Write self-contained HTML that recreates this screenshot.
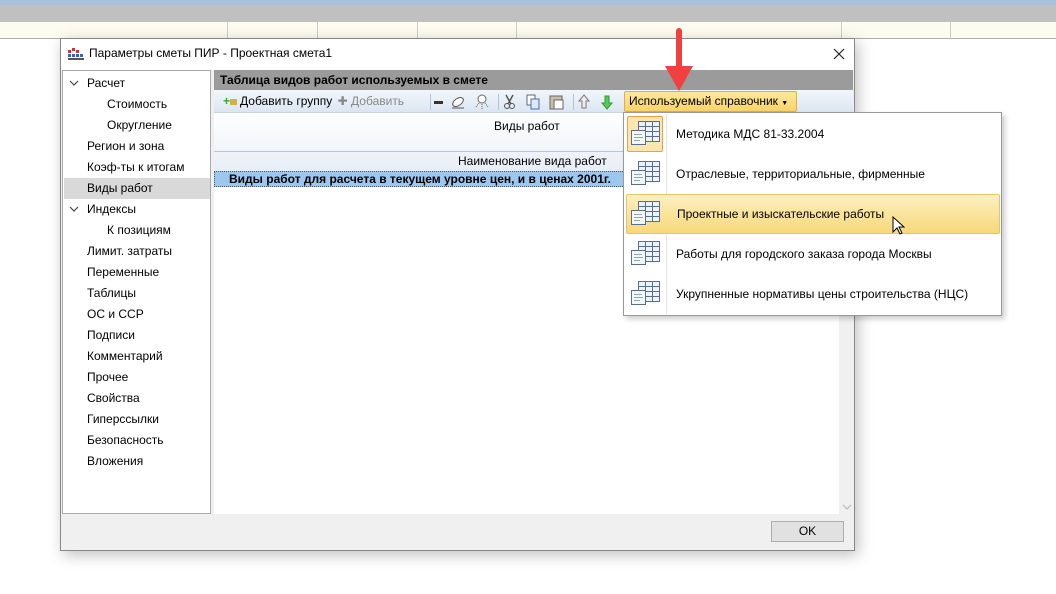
<!DOCTYPE html>
<html><head><meta charset="utf-8"><style>
*{margin:0;padding:0;box-sizing:border-box}
body{width:1056px;height:594px;overflow:hidden;background:#fff;font-family:"Liberation Sans",sans-serif;font-size:12px;color:#000;position:relative}
.a{position:absolute}
.tree div{position:absolute;left:0;width:148px;height:21px;line-height:21px;white-space:nowrap}
.mi{position:absolute;left:2px;width:374px;height:40px}
.mi .t{position:absolute;left:50px;top:0;line-height:40px;font-size:12px;white-space:nowrap}
</style></head><body>
<div class="a" style="left:0;top:0;width:1056px;height:5px;background:#a8c2dc"></div>
<div class="a" style="left:0;top:5px;width:1056px;height:17px;background:#c0c0c0"></div>
<div class="a" style="left:0;top:22px;width:1056px;height:17px;background:#fdfcf0;border-bottom:1px solid #b0b0b0"></div>
<div class="a" style="left:227px;top:22px;width:1px;height:17px;background:#ccc"></div>
<div class="a" style="left:317px;top:22px;width:1px;height:17px;background:#ccc"></div>
<div class="a" style="left:417px;top:22px;width:1px;height:17px;background:#ccc"></div>
<div class="a" style="left:516px;top:22px;width:1px;height:17px;background:#ccc"></div>
<div class="a" style="left:841px;top:22px;width:1px;height:17px;background:#ccc"></div>
<div class="a" style="left:950px;top:22px;width:1px;height:17px;background:#ccc"></div>

<div class="a" style="left:60px;top:38px;width:795px;height:513px;background:#f0f0f0;border:1px solid #888;box-shadow:3px 4px 14px rgba(0,0,0,.25)">
 <div class="a" style="left:0;top:0;width:793px;height:31px;background:#fff"></div>
 <svg class="a" style="left:7px;top:8px" width="16" height="14"><rect x="0" y="3" width="3" height="3" fill="#c33"/><rect x="4" y="1" width="3" height="3" fill="#c33"/><rect x="8" y="3" width="3" height="3" fill="#c33"/><rect x="0" y="7" width="3" height="3" fill="#36c"/><rect x="4" y="7" width="3" height="3" fill="#36c"/><rect x="8" y="7" width="3" height="3" fill="#36c"/><rect x="12" y="7" width="3" height="3" fill="#36c"/><rect x="0" y="11" width="16" height="2" fill="#555"/></svg>
 <div class="a" style="left:28px;top:7px;font-size:12px">Параметры сметы ПИР - Проектная смета1</div>
 <svg class="a" style="left:772px;top:9px" width="12" height="12"><path d="M1 1L11 11M11 1L1 11" stroke="#222" stroke-width="1.2"/></svg>
 <div class="a tree" style="left:1px;top:31px;width:149px;height:444px;background:#fff;border:1px solid #aaa">
  <div style="top:2px;left:24px">Расчет</div>
  <div style="top:107px;left:1px;width:146px;background:#d9d9d9;padding-left:23px">Виды работ</div>
  <div style="top:23px;left:44px">Стоимость</div>
  <div style="top:44px;left:44px">Округление</div>
  <div style="top:65px;left:24px">Регион и зона</div>
  <div style="top:86px;left:24px">Коэф-ты к итогам</div>
  <div style="top:128px;left:24px">Индексы</div>
  <div style="top:149px;left:44px">К позициям</div>
  <div style="top:170px;left:24px">Лимит. затраты</div>
  <div style="top:191px;left:24px">Переменные</div>
  <div style="top:212px;left:24px">Таблицы</div>
  <div style="top:233px;left:24px">ОС и ССР</div>
  <div style="top:254px;left:24px">Подписи</div>
  <div style="top:275px;left:24px">Комментарий</div>
  <div style="top:296px;left:24px">Прочее</div>
  <div style="top:317px;left:24px">Свойства</div>
  <div style="top:338px;left:24px">Гиперссылки</div>
  <div style="top:359px;left:24px">Безопасность</div>
  <div style="top:380px;left:24px">Вложения</div>
 </div>
 <svg class="a" style="left:8px;top:40px" width="10" height="8"><path d="M1 2l4 4 4-4" fill="none" stroke="#444" stroke-width="1.2"/></svg>
 <svg class="a" style="left:8px;top:166px" width="10" height="8"><path d="M1 2l4 4 4-4" fill="none" stroke="#444" stroke-width="1.2"/></svg>
 <div class="a" style="left:153px;top:31px;width:639px;height:444px;background:#fff"></div>
 <div class="a" style="left:153px;top:31px;width:639px;height:20px;background:#9b9b9b;font-weight:bold;padding-left:6px;line-height:20px">Таблица видов работ используемых в смете</div>
 <div class="a" style="left:153px;top:51px;width:639px;height:23px;background:linear-gradient(#f2f6fb,#dce6f2);border-bottom:1px solid #c8d4e2"></div>
 <div class="a" style="left:162px;top:55px;font-size:12px;line-height:14px"><span style="color:#3a3;font-weight:bold">+</span><span style="display:inline-block;width:7px;height:6px;background:#d8b040;margin-right:3px"></span>Добавить группу <span style="color:#888;margin-left:2px">✚ Добавить</span></div>
 <div class="a" style="left:369px;top:55px;width:1px;height:16px;background:#b8c4d4"></div>
 <div class="a" style="left:373px;top:62px;width:9px;height:3px;background:#333"></div>
 <svg class="a" style="left:390px;top:55px" width="44" height="16"><ellipse cx="7" cy="8" rx="6" ry="3.5" transform="rotate(-35 7 8)" fill="#fff" stroke="#555"/><path d="M1 14h12" stroke="#555"/><circle cx="31" cy="5" r="4" fill="#fff" stroke="#666"/><path d="M28 9l-3 4M34 9l3 4M31 10v5" stroke="#666" stroke-dasharray="1 1"/></svg>
 <div class="a" style="left:437px;top:55px;width:1px;height:16px;background:#b8c4d4"></div>
 <svg class="a" style="left:441px;top:54px" width="66" height="18"><path d="M4 2l5 9M11 2l-5 9" stroke="#555" stroke-width="1.5"/><circle cx="5" cy="13" r="2.5" fill="none" stroke="#555"/><circle cx="10" cy="13" r="2.5" fill="none" stroke="#555"/><rect x="25" y="2" width="8" height="10" fill="#fff" stroke="#667"/><rect x="29" y="6" width="8" height="10" fill="#dde8f8" stroke="#4a6ea8"/><rect x="48" y="3" width="12" height="13" fill="#c8c0a8" stroke="#666"/><rect x="52" y="7" width="9" height="9" fill="#fff" stroke="#666"/></svg>
 <div class="a" style="left:512px;top:55px;width:1px;height:16px;background:#b8c4d4"></div>
 <svg class="a" style="left:517px;top:55px" width="36" height="16"><path d="M6 1l5 6H8v7H4V7H1z" fill="#eee" stroke="#777"/><path d="M29 15l5-6h-3V2h-4v7h-3z" fill="#5c5" stroke="#393"/></svg>
 <div class="a" style="left:563px;top:52px;width:173px;height:21px;background:linear-gradient(#fde89a,#f8d36a);border:1px solid #e0b040;border-radius:2px;line-height:19px;padding-left:4px">Используемый справочник <span style="font-size:7px">▼</span></div>
 <div class="a" style="left:153px;top:74px;width:625px;height:58px;background:linear-gradient(#fff,#e8eef6)"></div>
 <div class="a" style="left:433px;top:80px">Виды работ</div>
 <div class="a" style="left:153px;top:112px;width:625px;height:1px;background:#b8c4d4"></div>
 <div class="a" style="left:397px;top:115px">Наименование вида работ</div>
 <div class="a" style="left:153px;top:132px;width:625px;height:16px;background:#9cc7ef;border:1px dotted #555;font-weight:bold;line-height:14px;padding-left:14px;white-space:nowrap;overflow:hidden">Виды работ для расчета в текущем уровне цен, и в ценах 2001г.</div>
 <div class="a" style="left:778px;top:74px;width:14px;height:401px;background:#f0f0f0"></div>
 <svg class="a" style="left:781px;top:464px" width="10" height="8"><path d="M1 2l4 4 4-4" fill="none" stroke="#bbb" stroke-width="1.2"/></svg>
 <div class="a" style="left:710px;top:482px;width:73px;height:21px;background:#e1e1e1;border:1px solid #adadad;text-align:center;line-height:19px">OK</div>
</div>

<div class="a" style="left:623px;top:112px;width:379px;height:204px;background:#fff;border:1px solid #999;box-shadow:3px 3px 5px rgba(0,0,0,.2)">
 <div class="a" style="left:42px;top:1px;width:1px;height:200px;background:#e4e4e4"></div>
 <div class="mi" style="top:1px"><div class="a" style="left:1px;top:2px;width:36px;height:36px;background:#fde6b0;border:1px solid #f0a040;border-radius:2px"></div><div class="t">Методика МДС 81-33.2004</div></div>
 <div class="mi" style="top:41px"><div class="t">Отраслевые, территориальные, фирменные</div></div>
 <div class="mi" style="top:81px;background:linear-gradient(#fdf0c0,#f7d97a);border:1px solid #e8c468;border-radius:2px"><div class="t" style="top:-1px">Проектные и изыскательские работы</div></div>
 <div class="mi" style="top:121px"><div class="t">Работы для городского заказа города Москвы</div></div>
 <div class="mi" style="top:161px"><div class="t">Укрупненные нормативы цены строительства (НЦС)</div></div>
</div>
<svg class="a" style="left:628px;top:118px" width="36" height="200">
 <g id="ic" fill="#fff" stroke="#5a6e88" stroke-width="1">
  <rect x="10.5" y="3.5" width="21" height="20" fill="#eef2f8"/>
  <path d="M10.5 8.5h21M10.5 13.5h21M10.5 18.5h21M17.5 3.5v20M24.5 3.5v20"/>
  <rect x="3.5" y="12.5" width="14" height="14" fill="#f4f6fa"/>
  <path d="M6 16.5h8M6 19.5h9M6 22.5h6" stroke="#8aa"/>
 </g>
 <use href="#ic" y="40"/><use href="#ic" y="80"/><use href="#ic" y="120"/><use href="#ic" y="160"/>
</svg>
<svg class="a" style="left:892px;top:216px" width="14" height="20"><path d="M1 1v15l4-4 3 6 2-1-3-6h5z" fill="#fff" stroke="#000"/></svg>
<svg class="a" style="left:664px;top:28px" width="30" height="66"><path d="M15 3v36" stroke="#f04040" stroke-width="6" stroke-linecap="round"/><path d="M1 38h28L15 63z" fill="#f04040"/></svg>
</body></html>
